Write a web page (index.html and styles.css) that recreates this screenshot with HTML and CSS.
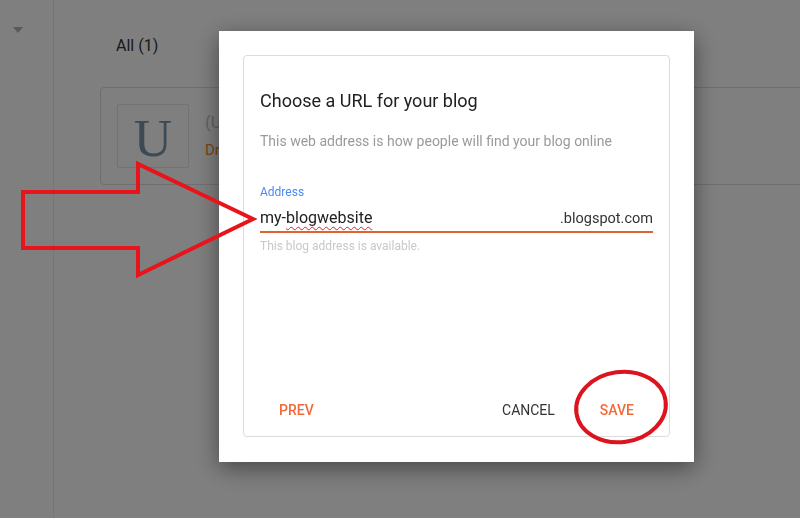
FILE: index.html
```html
<!DOCTYPE html>
<html>
<head>
<meta charset="utf-8">
<link rel="stylesheet" href="styles.css">
</head>
<body>
<div class="app">
  <aside class="sidebar"><span class="caret"></span></aside>
  <main class="main">
    <div class="tabs">All (1)</div>
    <div class="card">
      <div class="thumb">U</div>
      <div class="info">
        <div class="name">(Untitled)</div>
        <div class="status">Draft</div>
      </div>
    </div>
  </main>
</div>

<div class="scrim">
  <div class="dialog">
    <div class="panel">
      <h1 class="title">Choose a URL for your blog</h1>
      <p class="subtitle">This web address is how people will find your blog online</p>
      <label class="label">Address</label>
      <div class="field">
        <span class="value">my-<span class="misspelt">blogwebsite</span></span>
        <span class="suffix">.blogspot.com</span>
      </div>
      <div class="hint">This blog address is available.</div>
      <div class="actions">
        <button class="btn btn-accent">PREV</button>
        <span class="spacer"></span>
        <button class="btn">CANCEL</button>
        <button class="btn btn-accent">SAVE</button>
      </div>
    </div>
  </div>
</div>

<svg class="annot" width="800" height="518" viewBox="0 0 800 518">
  <polygon points="23,192 138,192 138,164 253,219 138,275 138,248 23,248" fill="none" stroke="#e8141c" stroke-width="4" stroke-linejoin="miter"/>
  <ellipse cx="621" cy="407" rx="45" ry="35" fill="none" stroke="#dc1420" stroke-width="4" transform="rotate(-8 621 407)"/>
</svg>
</body>
</html>
```

FILE: styles.css
```css
* { box-sizing: border-box; }
html, body {
  margin: 0;
  padding: 0;
  width: 800px;
  height: 518px;
  overflow: hidden;
  background: #fff;
  font-family: Roboto, "Liberation Sans", Arial, sans-serif;
}

.app {
  display: flex;
  height: 518px;
}
.sidebar {
  width: 54px;
  border-right: 1px solid #eaeaea;
  position: relative;
  padding: 27px 0 0 13px;
}
.caret {
  display: block;
  width: 0;
  height: 0;
  border-left: 5.5px solid transparent;
  border-right: 5.5px solid transparent;
  border-top: 6px solid #b4b4b4;
}
.main {
  flex: 1;
  padding: 36px 0 0 46px;
  overflow: hidden;
}
.tabs {
  padding-left: 16px;
  font-size: 16px;
  line-height: 20px;
  color: #333;
}
.card {
  margin-top: 31px;
  margin-right: -20px;
  height: 98px;
  border: 1px solid #dedede;
  border-radius: 4px;
  padding: 16px;
  display: flex;
  gap: 16px;
}
.thumb {
  width: 72px;
  height: 64px;
  border: 1px solid #e6e6e6;
  border-radius: 2px;
  display: flex;
  align-items: center;
  justify-content: center;
  font-family: "Liberation Serif", "DejaVu Serif", serif;
  font-size: 53px;
  color: #7d94a6;
  line-height: 1;
  padding-top: 4px;
}
.info { padding-top: 6px; }
.name {
  font-size: 17px;
  color: #c4c4c4;
  line-height: 24px;
}
.status {
  margin-top: 6px;
  font-size: 15px;
  color: #f08a30;
  line-height: 20px;
}

.scrim {
  position: fixed;
  inset: 0;
  background: rgba(0, 0, 0, 0.5);
  padding: 31px 0 0 219px;
}
.dialog {
  width: 475px;
  height: 431px;
  background: #fff;
  padding: 24px;
  box-shadow: 0 6px 22px rgba(0, 0, 0, 0.45);
}
.panel {
  height: 382px;
  border: 1px solid #dcdcdc;
  border-radius: 4px;
  padding: 33px 16px 8px 16px;
  display: flex;
  flex-direction: column;
}
.title {
  margin: 0;
  font-size: 18px;
  font-weight: 400;
  line-height: 24px;
  color: #212121;
}
.subtitle {
  margin: 18px 0 0;
  font-size: 14px;
  line-height: 20px;
  color: #9a9a9a;
}
.label {
  display: block;
  margin-top: 33px;
  font-size: 12px;
  line-height: 16px;
  color: #4a8af4;
}
.field {
  margin-top: 6px;
  display: flex;
  justify-content: space-between;
  align-items: baseline;
  height: 27px;
  padding-bottom: 1px;
  border-bottom: 2px solid #e0622f;
  font-size: 16px;
  line-height: 24px;
  color: #212121;
}
.suffix {
  font-size: 14.5px;
  color: #333;
}
.misspelt {
  text-decoration: underline wavy #e02020;
  text-decoration-thickness: 1px;
  text-underline-offset: 3px;
}
.hint {
  margin-top: 6px;
  font-size: 12px;
  line-height: 15px;
  color: #c8c8c8;
}
.actions {
  margin-top: auto;
  margin-left: 3px;
  margin-right: 3px;
  display: flex;
  align-items: center;
  gap: 13px;
}
.spacer { flex: 1; }
.btn {
  border: 0;
  background: none;
  height: 36px;
  padding: 0 16px;
  font-family: Roboto, "Liberation Sans", Arial, sans-serif;
  font-size: 14px;
  font-weight: 400;
  line-height: 36px;
  color: #333;
}
.btn-accent { color: #f06a3a; font-weight: 500; }

.annot {
  position: fixed;
  left: 0;
  top: 0;
  pointer-events: none;
}
```
